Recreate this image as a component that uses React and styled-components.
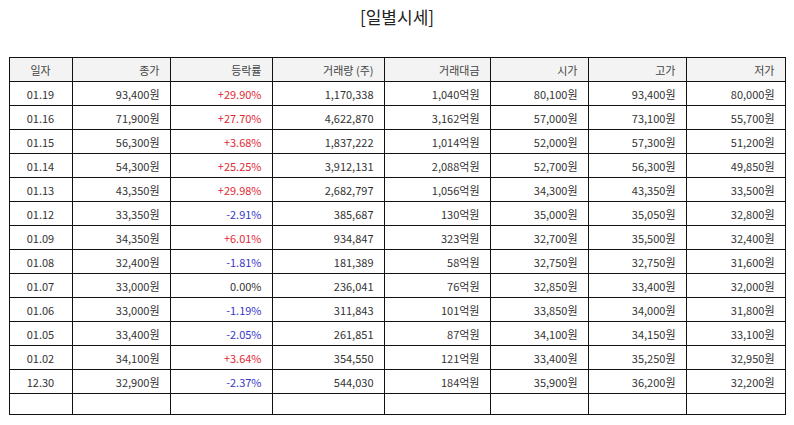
import { styled, createGlobalStyle } from "styled-components";

const GlobalStyle = createGlobalStyle`
  body {
    margin: 0;
    background: #ffffff;
    font-family: "Noto Sans CJK KR", "Noto Sans", sans-serif;
    color: #333333;
  }
`;

const Page = styled.div`
  display: flex;
  flex-direction: column;
  align-items: center;
  padding: 5px 10px 0 10px;
`;

const Title = styled.h2`
  margin: 0 0 28px 0;
  font-size: 17px;
  font-weight: 400;
  line-height: 24px;
  color: #222222;
`;

const Table = styled.table`
  width: 776px;
  border-collapse: collapse;
  table-layout: fixed;
  font-size: 11px;
`;

const HeadCell = styled.th`
  height: 23px;
  padding: 0 10px;
  border: 1px solid #111111;
  background: #f3f3f3;
  font-weight: 400;
  color: #444444;
  text-align: ${(p) => (p.$center ? "center" : "right")};
`;

const Cell = styled.td`
  height: ${(p) => (p.$empty ? "20px" : "23px")};
  padding: 0 10px;
  border: 1px solid #111111;
  color: ${(p) =>
    p.$tone === "up" ? "#e02a35" : p.$tone === "down" ? "#3737c8" : "#333333"};
  text-align: ${(p) => (p.$center ? "center" : "right")};
  white-space: nowrap;
`;

const columns = [
  { label: "일자", width: 63, center: true },
  { label: "종가", width: 98 },
  { label: "등락률", width: 102 },
  { label: "거래량 (주)", width: 112 },
  { label: "거래대금", width: 106 },
  { label: "시가", width: 98 },
  { label: "고가", width: 98 },
  { label: "저가", width: 99 },
];

const rows = [
  ["01.19", "93,400원", "+29.90%", "1,170,338", "1,040억원", "80,100원", "93,400원", "80,000원"],
  ["01.16", "71,900원", "+27.70%", "4,622,870", "3,162억원", "57,000원", "73,100원", "55,700원"],
  ["01.15", "56,300원", "+3.68%", "1,837,222", "1,014억원", "52,000원", "57,300원", "51,200원"],
  ["01.14", "54,300원", "+25.25%", "3,912,131", "2,088억원", "52,700원", "56,300원", "49,850원"],
  ["01.13", "43,350원", "+29.98%", "2,682,797", "1,056억원", "34,300원", "43,350원", "33,500원"],
  ["01.12", "33,350원", "-2.91%", "385,687", "130억원", "35,000원", "35,050원", "32,800원"],
  ["01.09", "34,350원", "+6.01%", "934,847", "323억원", "32,700원", "35,500원", "32,400원"],
  ["01.08", "32,400원", "-1.81%", "181,389", "58억원", "32,750원", "32,750원", "31,600원"],
  ["01.07", "33,000원", "0.00%", "236,041", "76억원", "32,850원", "33,400원", "32,000원"],
  ["01.06", "33,000원", "-1.19%", "311,843", "101억원", "33,850원", "34,000원", "31,800원"],
  ["01.05", "33,400원", "-2.05%", "261,851", "87억원", "34,100원", "34,150원", "33,100원"],
  ["01.02", "34,100원", "+3.64%", "354,550", "121억원", "33,400원", "35,250원", "32,950원"],
  ["12.30", "32,900원", "-2.37%", "544,030", "184억원", "35,900원", "36,200원", "32,200원"],
];

const toneOf = (value) =>
  value.startsWith("+") ? "up" : value.startsWith("-") ? "down" : undefined;

const App = () => {
  return (
    <Page>
      <GlobalStyle />
      <Title>[일별시세]</Title>
      <Table>
        <colgroup>
          {columns.map((c) => (
            <col key={c.label} style={{ width: c.width }} />
          ))}
        </colgroup>
        <thead>
          <tr>
            {columns.map((c) => (
              <HeadCell key={c.label} $center={c.center}>
                {c.label}
              </HeadCell>
            ))}
          </tr>
        </thead>
        <tbody>
          {rows.map((row) => (
            <tr key={row[0]}>
              {row.map((value, i) => (
                <Cell
                  key={i}
                  $center={i === 0}
                  $tone={i === 2 ? toneOf(value) : undefined}
                >
                  {value}
                </Cell>
              ))}
            </tr>
          ))}
          <tr>
            {columns.map((c) => (
              <Cell key={c.label} $empty />
            ))}
          </tr>
        </tbody>
      </Table>
    </Page>
  );
};

export default App;
